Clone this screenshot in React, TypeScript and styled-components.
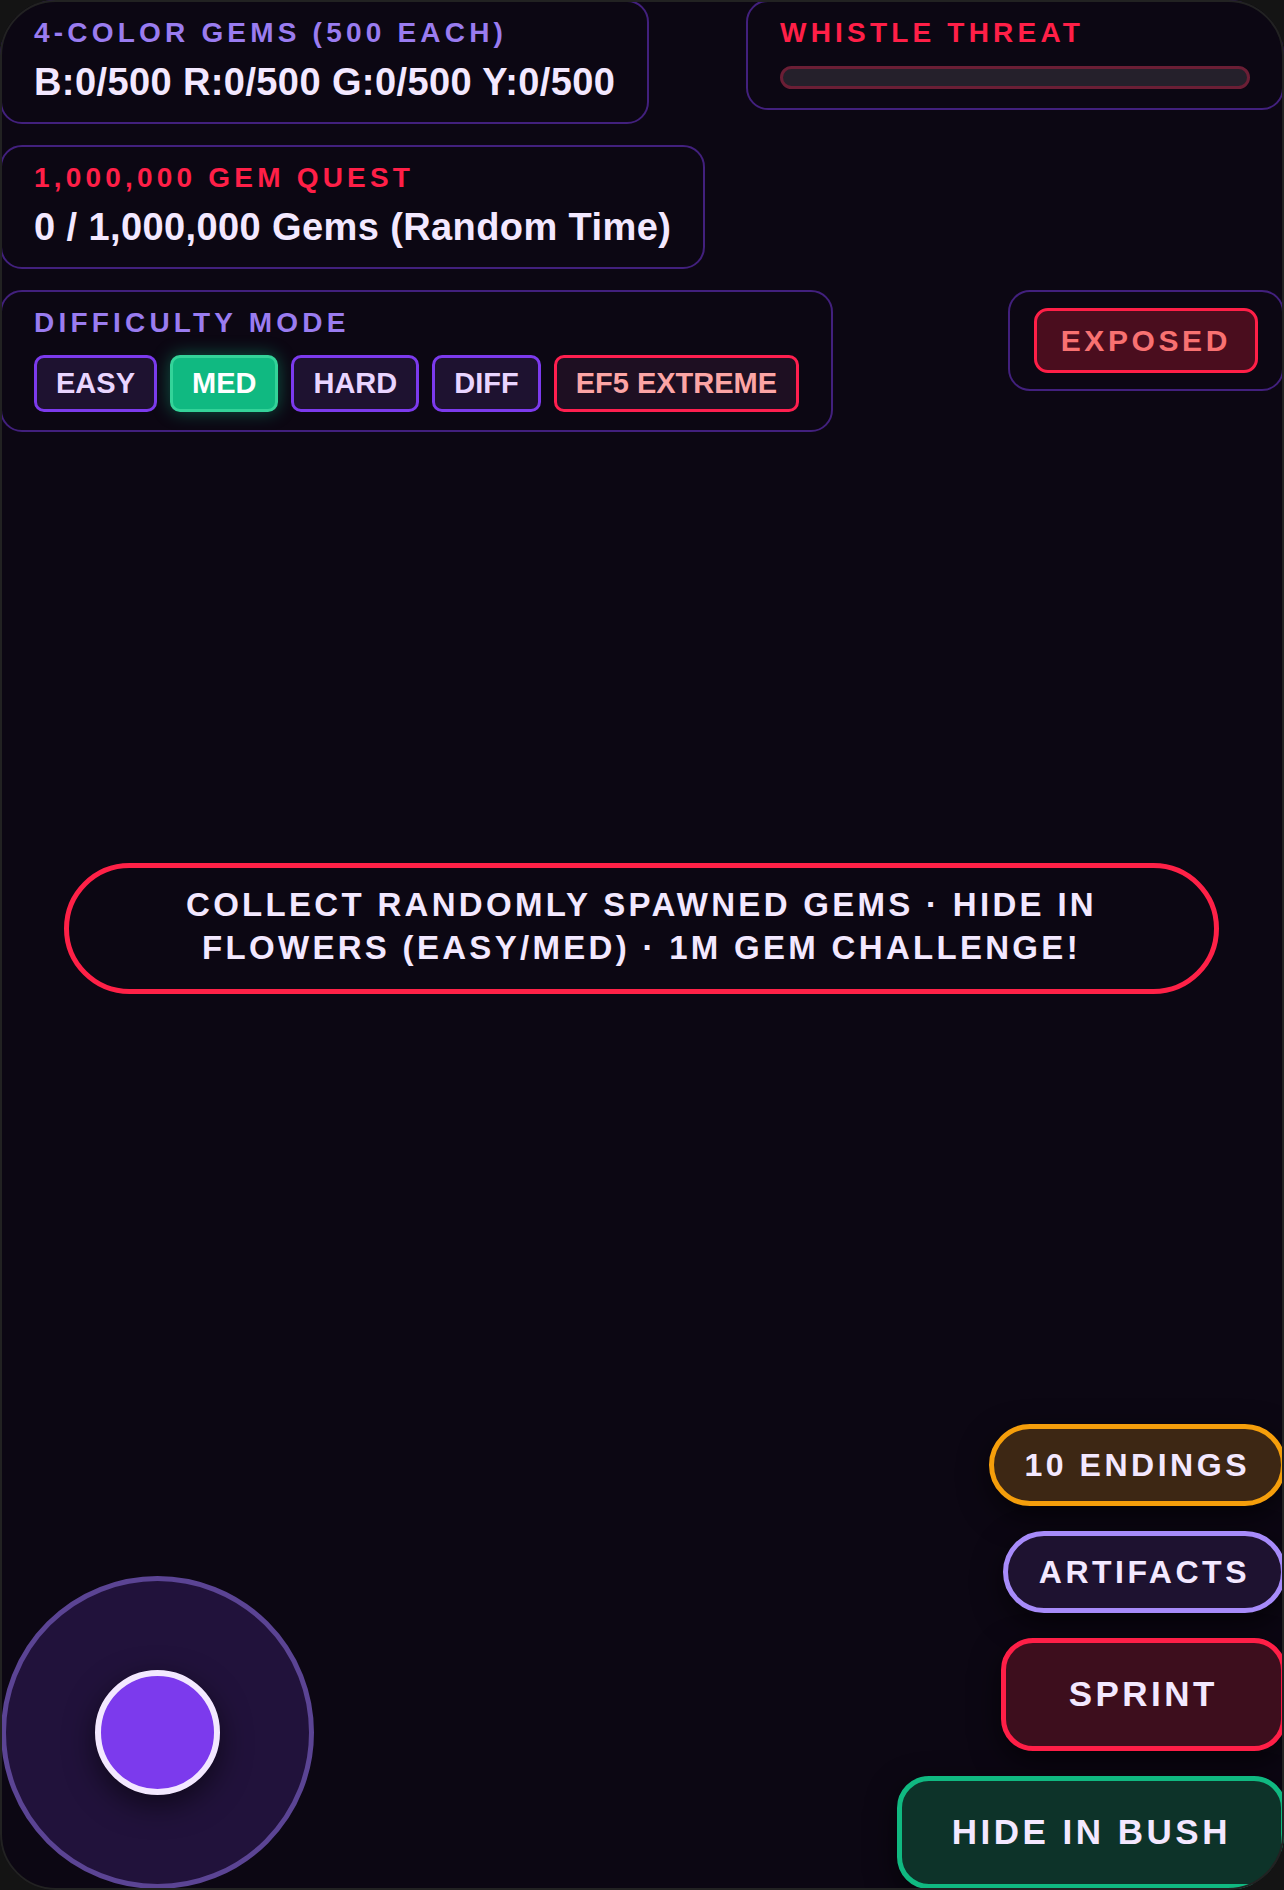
import { createGlobalStyle, styled, css } from 'styled-components';

type Tone = 'amber' | 'violet' | 'red' | 'green';

const difficulties = [
  { id: 'easy', label: 'EASY' },
  { id: 'med', label: 'MED' },
  { id: 'hard', label: 'HARD' },
  { id: 'diff', label: 'DIFF' },
  { id: 'ef5', label: 'EF5 EXTREME' },
];

const gems = { B: 0, R: 0, G: 0, Y: 0 };

export default function App() {
  const selected = 'med';
  const threat = 0;

  return (
    <>
      <GlobalStyle />
      <Frame>
        <TopHud>
          <HudRow>
            <Card>
              <CardLabel $tone="violet">4-Color Gems (500 each)</CardLabel>
              <CardValue>
                {Object.entries(gems)
                  .map(([k, v]) => `${k}:${v}/500`)
                  .join(' ')}
              </CardValue>
            </Card>
            <ThreatCard>
              <CardLabel $tone="red">Whistle Threat</CardLabel>
              <ThreatBar>
                <ThreatFill style={{ width: `${threat}%` }} />
              </ThreatBar>
            </ThreatCard>
          </HudRow>

          <HudRow>
            <Card>
              <CardLabel $tone="red">1,000,000 Gem Quest</CardLabel>
              <CardValue>0 / 1,000,000 Gems (Random Time)</CardValue>
            </Card>
          </HudRow>

          <HudRow>
            <Card>
              <CardLabel $tone="violet">Difficulty Mode</CardLabel>
              <ModeList>
                {difficulties.map((d) => (
                  <ModeButton key={d.id} $active={d.id === selected} $danger={d.id === 'ef5'}>
                    {d.label}
                  </ModeButton>
                ))}
              </ModeList>
            </Card>
            <StatusCard>
              <StatusBadge>EXPOSED</StatusBadge>
            </StatusCard>
          </HudRow>
        </TopHud>

        <Banner>COLLECT RANDOMLY SPAWNED GEMS · HIDE IN FLOWERS (EASY/MED) · 1M GEM CHALLENGE!</Banner>

        <BottomHud>
          <JoystickBase>
            <JoystickKnob />
          </JoystickBase>
          <ActionColumn>
            <ActionButton $tone="amber">10 ENDINGS</ActionButton>
            <ActionButton $tone="violet">ARTIFACTS</ActionButton>
            <ActionButton $tone="red" $big>
              SPRINT
            </ActionButton>
            <ActionButton $tone="green" $big>
              HIDE IN BUSH
            </ActionButton>
          </ActionColumn>
        </BottomHud>
      </Frame>
    </>
  );
}

const GlobalStyle = createGlobalStyle`
  html, body {
    margin: 0;
    padding: 0;
    background: #141414;
  }
  body {
    font-family: "Liberation Sans", Arial, sans-serif;
    -webkit-font-smoothing: antialiased;
  }
  * {
    box-sizing: border-box;
  }
`;

const Frame = styled.div`
  width: 1284px;
  height: 1890px;
  border-radius: 56px;
  overflow: hidden;
  background: #0c0713;
  outline: 2px solid #222222;
  outline-offset: -2px;
  display: flex;
  flex-direction: column;
  color: #f3e8ff;
`;

const TopHud = styled.div`
  display: flex;
  flex-direction: column;
  gap: 21px;
`;

const HudRow = styled.div`
  display: flex;
  justify-content: space-between;
  align-items: flex-start;
`;

const Card = styled.div`
  border: 2px solid #42207d;
  border-radius: 22px;
  padding: 16px 32px 18px;
  background: #0c0713;
`;

const ThreatCard = styled(Card)`
  width: 538px;
  padding-bottom: 19px;
`;

const StatusCard = styled(Card)`
  padding: 16px 24px;
`;

const CardLabel = styled.div<{ $tone: 'violet' | 'red' }>`
  font-size: 28px;
  line-height: 30px;
  font-weight: 700;
  letter-spacing: 0.15em;
  text-transform: uppercase;
  color: ${({ $tone }) => ($tone === 'red' ? '#ff1f47' : '#9a7cf0')};
`;

const CardValue = styled.div`
  margin-top: 12px;
  font-size: 38px;
  line-height: 44px;
  font-weight: 700;
  letter-spacing: 0.4px;
  color: #f3e8ff;
  white-space: nowrap;
`;

const ThreatBar = styled.div`
  margin-top: 18px;
  height: 23px;
  border: 3px solid #6b1e35;
  border-radius: 12px;
  background: #25202b;
  overflow: hidden;
`;

const ThreatFill = styled.div`
  height: 100%;
  background: #ff1f47;
`;

const ModeList = styled.div`
  margin-top: 17px;
  display: flex;
  gap: 13px;
`;

const ModeButton = styled.div<{ $active?: boolean; $danger?: boolean }>`
  height: 57px;
  padding: 0 19px;
  display: flex;
  align-items: center;
  border: 3px solid #7c3aed;
  border-radius: 10px;
  background: #1e1230;
  color: #e9d5ff;
  font-size: 29px;
  font-weight: 700;
  white-space: nowrap;

  ${({ $danger }) =>
    $danger &&
    css`
      border-color: #ff1f4f;
      background: #1e0f22;
      color: #fca5a5;
    `}

  ${({ $active }) =>
    $active &&
    css`
      border-color: #34d399;
      background: #10b981;
      color: #ffffff;
      box-shadow: 0 0 18px rgba(16, 185, 129, 0.45);
    `}
`;

const StatusBadge = styled.div`
  padding: 13px 24px;
  border: 3px solid #ff1f47;
  border-radius: 14px;
  background: #4a0d1e;
  color: #f87171;
  font-size: 30px;
  line-height: 33px;
  font-weight: 700;
  letter-spacing: 0.12em;
`;

const Banner = styled.div`
  margin: 431px 0 0 64px;
  width: 1155px;
  padding: 15px 60px 20px;
  border: 5px solid #ff2147;
  border-radius: 66px;
  background: #0c0713;
  text-align: center;
  color: #f3e8ff;
  font-size: 33px;
  line-height: 43px;
  font-weight: 700;
  letter-spacing: 0.1em;
`;

const BottomHud = styled.div`
  margin-top: auto;
  display: flex;
  justify-content: space-between;
  align-items: flex-end;
  padding: 0 0 1px 1px;
`;

const JoystickBase = styled.div`
  width: 313px;
  height: 313px;
  border-radius: 50%;
  border: 5px solid #5b4494;
  background: #21123b;
  display: flex;
  align-items: center;
  justify-content: center;
`;

const JoystickKnob = styled.div`
  width: 125px;
  height: 125px;
  border-radius: 50%;
  border: 6px solid #f3e8ff;
  background: #7c3aed;
  box-shadow: 0 10px 30px rgba(0, 0, 0, 0.55);
`;

const ActionColumn = styled.div`
  display: flex;
  flex-direction: column;
  align-items: flex-end;
  gap: 25px;
  margin-right: -2px;
`;

const tones: Record<Tone, { border: string; bg: string }> = {
  amber: { border: '#f59e0b', bg: '#3d2714' },
  violet: { border: '#a78bfa', bg: '#1e1230' },
  red: { border: '#ff1f47', bg: '#3d0e1d' },
  green: { border: '#10b981', bg: '#0d3329' },
};

const ActionButton = styled.div<{ $tone: Tone; $big?: boolean }>`
  border: 5px solid ${({ $tone }) => tones[$tone].border};
  background: ${({ $tone }) => tones[$tone].bg};
  color: #f3e8ff;
  font-weight: 700;
  white-space: nowrap;
  box-shadow: 0 10px 30px rgba(0, 0, 0, 0.6);

  ${({ $big }) =>
    $big
      ? css`
          padding: 31px 50px 32px;
          border-radius: 32px;
          font-size: 35px;
          line-height: 40px;
          letter-spacing: 0.1em;
        `
      : css`
          padding: 18px 31px;
          border-radius: 41px;
          font-size: 32px;
          line-height: 36px;
          letter-spacing: 0.11em;
        `}

  ${({ $tone, $big }) =>
    $big &&
    $tone === 'red' &&
    css`
      padding-left: 63px;
      padding-right: 63px;
    `}
`;
